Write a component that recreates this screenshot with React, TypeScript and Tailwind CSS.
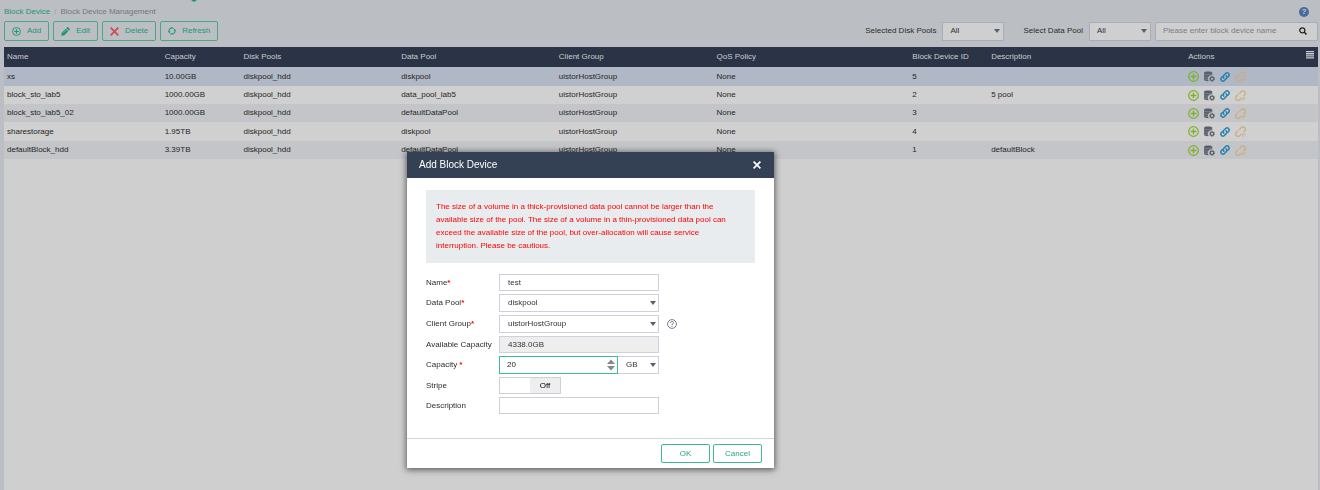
import React from "react";

const rows = [
  ["xs", "10.00GB", "diskpool_hdd", "diskpool", "uistorHostGroup", "None", "5", ""],
  ["block_sto_lab5", "1000.00GB", "diskpool_hdd", "data_pool_lab5", "uistorHostGroup", "None", "2", "5 pool"],
  ["block_sto_lab5_02", "1000.00GB", "diskpool_hdd", "defaultDataPool", "uistorHostGroup", "None", "3", ""],
  ["sharestorage", "1.95TB", "diskpool_hdd", "diskpool", "uistorHostGroup", "None", "4", ""],
  ["defaultBlock_hdd", "3.39TB", "diskpool_hdd", "defaultDataPool", "uistorHostGroup", "None", "1", "defaultBlock"],
];

const columns = [
  { label: "Name", width: "w-[12%]" },
  { label: "Capacity", width: "w-[6%]" },
  { label: "Disk Pools", width: "w-[12%]" },
  { label: "Data Pool", width: "w-[12%]" },
  { label: "Client Group", width: "w-[12%]" },
  { label: "QoS Policy", width: "w-[14.9%]" },
  { label: "Block Device ID", width: "w-[6%]" },
  { label: "Description", width: "w-[15%]" },
];

function PlusCircle({ className }: { className: string }) {
  return (
    <svg viewBox="0 0 20 20" className={className} fill="none" stroke="currentColor" aria-hidden="true">
      <circle cx="10" cy="10" r="8.8" strokeWidth="2.1" />
      <path d="M10 4.800v10.400M4.800 10h10.400" strokeWidth="2.500" />
    </svg>
  );
}

function DiskGear() {
  return (
    <svg viewBox="0 0 20 20" className="size-[11px]" aria-hidden="true">
      <path
        fill="#596069"
        d="M0 3.200C0 1.600 3.400.8 7.500.8S15 1.600 15 3.200v4.600A6.500 6.500 0 0 0 8.500 18.400l-1 .1C3.400 18.500 0 17.600 0 16z"
      />
      <path d="M0 5.400c2 1.800 13 1.800 15 0M0 10c1.600 1.200 5.500 1.500 8.800 1.200M0 14c1.600 1 4.500 1.300 7.500 1.100" stroke="#a0a6af" strokeWidth=".8" fill="none" />
      <circle cx="14.600" cy="14.300" r="3.200" fill="none" stroke="#596069" strokeWidth="2.300" />
      <circle cx="14.600" cy="14.300" r="4.600" fill="none" stroke="#596069" strokeWidth="1.400" strokeDasharray="1.900 1.710" />
    </svg>
  );
}

function ChainLink() {
  return (
    <svg viewBox="1 1 22 22" className="size-[10px]" fill="none" stroke="#2683b0" strokeWidth="3.300" strokeLinecap="round" aria-hidden="true">
      <path d="M9.500 14.500a4.600 4.600 0 0 1 0-6.500l3.800-3.700a4.600 4.600 0 0 1 6.500 6.500l-1.800 1.800" />
      <path d="M14.500 9.500a4.600 4.600 0 0 1 0 6.500l-3.800 3.700a4.600 4.600 0 0 1-6.500-6.500l1.800-1.800" />
    </svg>
  );
}

function BrokenLink() {
  return (
    <svg viewBox="1 1 22 22" className="size-[11px]" fill="none" stroke="#cbab78" strokeWidth="2.500" strokeLinecap="round" aria-hidden="true">
      <path d="M9.800 8.200l3.600-4a4.800 4.800 0 0 1 6.900 0a4.800 4.800 0 0 1 0 6.900l-1.500 1.500" />
      <path d="M6.500 10.800l-2.800 2.600a4.800 4.800 0 0 0 0 6.900a4.800 4.800 0 0 0 6.900 0l2.400-2.400" />
      <path d="M17.500 16.500l4 .8M16.300 18.300l.9 3.700" strokeWidth="1.900" />
    </svg>
  );
}

function Pencil() {
  return (
    <svg viewBox="0 0 20 20" className="size-[9px]" fill="currentColor" aria-hidden="true">
      <path d="M.5 19.500l1.200-7L10.500 3.700l5.800 5.800-8.800 8.800z" />
      <path d="M11.700 2.500L13.500.7c.7-.7 1.600-.7 2.300 0l3.500 3.500c.7.700.7 1.600 0 2.300l-1.800 1.800z" />
      <path d="M5.500 12.500l6-6" stroke="#bbbfc3" strokeWidth="1.200" />
    </svg>
  );
}

function RedCross() {
  return (
    <svg viewBox="0 0 20 20" className="size-[9px]" fill="none" stroke="#c54e52" strokeWidth="3.800" aria-hidden="true">
      <path d="M1.500 1.500l17 17M18.500 1.500l-17 17" />
    </svg>
  );
}

function RefreshRing() {
  return (
    <svg viewBox="0 0 20 20" className="size-2" fill="none" stroke="currentColor" strokeWidth="2.600" aria-hidden="true">
      <path d="M3.200 13.500A7.600 7.600 0 0 1 14 3.600M16.800 6.500A7.600 7.600 0 0 1 6 16.400" />
      <path d="M0 10.500l3.200 4.500L7 11.500zM20 9.500L16.800 5 13 8.500z" fill="currentColor" stroke="none" />
    </svg>
  );
}

function Caret({ className = "" }: { className?: string }) {
  return (
    <svg viewBox="0 0 6 4" className={`pointer-events-none absolute h-1 w-1.5 ${className}`} aria-hidden="true">
      <path d="M0 0h6L3 4z" fill="#556070" />
    </svg>
  );
}

function ToolButton({ icon, label }: { icon: React.ReactNode; label: string }) {
  return (
    <button type="button" className="flex h-5 items-center gap-1.5 rounded-xs border border-[#4ba68a] px-[7px] text-[#1f9670]">
      {icon}
      {label}
    </button>
  );
}

function Filter({ id, label }: { id: string; label: string }) {
  return (
    <div className="flex items-center gap-1.5">
      <label htmlFor={id} className="text-[#2c2c2c]">{label}</label>
      <div className="relative flex items-center">
        <select id={id} className="h-[19px] w-[62px] appearance-none border border-[#a9adba] bg-[#cfcfcf] px-[7px] text-[#333]">
          <option>All</option>
        </select>
        <Caret className="right-1" />
      </div>
    </div>
  );
}

function Field({ id, label, required, children }: { id: string; label: React.ReactNode; required?: boolean; children: React.ReactNode }) {
  return (
    <div className="flex items-center">
      <label htmlFor={id} className="w-[73px] shrink-0 whitespace-nowrap text-[#2c2c2c]">
        {label}
        {required && <span className="font-bold text-[#f00]">*</span>}
      </label>
      {children}
    </div>
  );
}

function SelectBox({ id, value }: { id: string; value: string }) {
  return (
    <div className="relative flex items-center">
      <select id={id} className="h-[18px] w-40 appearance-none border border-[#cfd0dc] bg-white px-2 text-[#333]">
        <option>{value}</option>
      </select>
      <Caret className="right-[3px]" />
    </div>
  );
}

const inputClass = "h-[17px] w-40 border border-[#cfd0dc] px-2 text-[#333]";
const footerButton = "h-[19px] w-[49px] rounded-xs border border-[#3dbb91] text-[#1fa97c]";

export default function App() {
  return (
    <div className="min-h-screen bg-[#bbbfc3] font-['Liberation_Sans',Arial,sans-serif] text-[8px] leading-3">
      <svg viewBox="0 0 6 2" className="absolute top-0 left-[191px] h-0.5 w-1.5" aria-hidden="true">
        <path d="M0 0h6L3 2z" fill="#1f9670" />
      </svg>
      <main className="flex min-h-screen flex-col pr-0.5 pl-1">
        <header className="flex items-center justify-between pt-1.5 pr-[9px]">
          <nav aria-label="Breadcrumb" className="flex gap-1">
            <a href="#" className="text-[#1f9670]">Block Device</a>
            <span className="text-[#9a9da1]">/</span>
            <span className="text-[#74777b]">Block Device Management</span>
          </nav>
          <button type="button" aria-label="Help" className="flex size-[10px] items-center justify-center rounded-full bg-[#4a6a9c] text-[8px] font-bold text-[#c4c8ce]">?</button>
        </header>
        <div className="mt-[3px] flex items-center justify-between">
          <div className="flex gap-1">
            <ToolButton icon={<PlusCircle className="size-[9px]" />} label="Add" />
            <ToolButton icon={<Pencil />} label="Edit" />
            <ToolButton icon={<RedCross />} label="Delete" />
            <ToolButton icon={<RefreshRing />} label="Refresh" />
          </div>
          <div className="flex items-center">
            <Filter id="disk" label="Selected Disk Pools" />
            <div className="ml-[19px]"><Filter id="data" label="Select Data Pool" /></div>
            <div className="ml-1 flex h-[19px] w-[163px] items-center rounded-xs border border-[#a9adba] bg-[#cfcfcf] pr-2.5 pl-[7px]">
              <input aria-label="Search block devices" placeholder="Please enter block device name" className="min-w-0 flex-1 bg-transparent placeholder:text-[#7b7d80]" />
              <button type="button" aria-label="Search">
                <svg viewBox="0 0 18 18" className="size-2" fill="none" stroke="#1b1f26" aria-hidden="true">
                  <circle cx="7.500" cy="7.500" r="5.800" strokeWidth="2.800" />
                  <path d="M12 12l5 5" strokeWidth="3.400" />
                </svg>
              </button>
            </div>
          </div>
        </div>
        <section className="mt-1.5 flex-1 bg-[#cfcfcf]">
          <table className="w-full table-fixed border-collapse text-left text-[#262626]">
            <thead>
              <tr className="h-5 bg-[#2a3446] text-[#c9ccd0]">
                {columns.map((c) => (
                  <th key={c.label} className={`${c.width} p-0 pl-[3px] font-normal whitespace-nowrap`}>{c.label}</th>
                ))}
                <th className="p-0 pr-1 pl-[3px] font-normal">
                  <span className="flex items-start justify-between">
                    Actions
                    <button type="button" aria-label="Choose columns">
                      <svg viewBox="0 0 16 16" className="size-2" fill="#c9ccd0" aria-hidden="true">
                        <path d="M0 0h16v2.600H0zM0 4.200h16v2.600H0zM0 8.400h16V11H0zM0 12.600h16v2.600H0z" />
                      </svg>
                    </button>
                  </span>
                </th>
              </tr>
            </thead>
            <tbody>
              {rows.map((r, index) => (
                <tr
                  key={r[0]}
                  className={`h-[18px] nth-[3n+1]:h-[19px] ${index === 0 ? "bg-[#b0b7c5]" : "odd:bg-[#c3c5c9] even:bg-[#d0d0d0]"}`}
                >
                  {r.map((v, i) => <td key={i} className="p-0 pl-[3px]">{v}</td>)}
                  <td className="p-0 pl-[3px]">
                    <span className="flex items-center gap-[5px]">
                      <button type="button" aria-label="Expand" className="text-[#7fb02a]"><PlusCircle className="size-[11px]" /></button>
                      <button type="button" aria-label="Configure"><DiskGear /></button>
                      <button type="button" aria-label="Map"><ChainLink /></button>
                      <button type="button" aria-label="Unmap"><BrokenLink /></button>
                    </span>
                  </td>
                </tr>
              ))}
            </tbody>
          </table>
        </section>
      </main>

      <div className="fixed inset-0 flex items-start justify-center pt-[152px] pr-[139px]">
        <div role="dialog" aria-labelledby="dialog-title" className="w-[367px] bg-white shadow-[0_1px_6px_1px_rgba(0,0,0,0.55)]">
          <div className="flex h-[26px] items-center justify-between bg-[#344053] pr-[13px] pl-3 text-white">
            <h2 id="dialog-title" className="text-[10px]">Add Block Device</h2>
            <button type="button" aria-label="Close">
              <svg viewBox="0 0 8 8" className="size-2" fill="none" stroke="#fff" strokeWidth="1.700" aria-hidden="true">
                <path d="M.6.6l6.800 6.800M7.400.6L.6 7.400" />
              </svg>
            </button>
          </div>
          <div className="px-[19px] pt-3 pb-6">
            <p className="bg-[#e8ecef] pt-2.5 pr-5 pb-[11px] pl-2.5 leading-[13px] text-[#f00]">
              The size of a volume in a thick-provisioned data pool cannot be larger than the available size of the pool. The size of a volume in a thin-provisioned data pool can exceed the available size of the pool, but over-allocation will cause service interruption. Please be cautious.
            </p>
            <form className="mt-[11px] flex flex-col gap-[3px]">
              <Field id="name" label="Name" required>
                <input id="name" className={`${inputClass} bg-white`} defaultValue="test" />
              </Field>
              <Field id="pool" label="Data Pool" required>
                <SelectBox id="pool" value="diskpool" />
              </Field>
              <Field id="group" label="Client Group" required>
                <SelectBox id="group" value="uistorHostGroup" />
                <svg viewBox="0 0 20 20" className="ml-2 size-[10px]" fill="none" stroke="#5c6673" aria-hidden="true">
                  <circle cx="10" cy="10" r="8.800" strokeWidth="1.700" />
                  <path d="M7 8c0-4 6-4 6-.5 0 2-3 2.200-3 4.500M10 13.500v2" strokeWidth="1.900" />
                </svg>
              </Field>
              <Field id="available" label="Available Capacity">
                <input id="available" className={`${inputClass} bg-[#eee]`} defaultValue="4338.0GB" readOnly />
              </Field>
              <Field id="capacity" label="Capacity " required>
                <div className="flex h-[18px] w-[119px] items-center border border-[#3dbb91] bg-white pr-0.5 pl-[7px]">
                  <input id="capacity" inputMode="numeric" className="min-w-0 flex-1 text-[#222] outline-none" defaultValue="20" />
                  <svg viewBox="0 0 8 12" className="h-3 w-2" fill="#888" aria-hidden="true">
                    <path d="M0 5h8L4 .5zM0 7h8l-4 4.500z" />
                  </svg>
                </div>
                <div className="relative flex items-center">
                  <select aria-label="Capacity unit" className="h-[18px] w-[41px] appearance-none border border-l-0 border-[#cfd0dc] bg-white px-2 text-[#333]">
                    <option>GB</option>
                  </select>
                  <Caret className="right-[3px]" />
                </div>
              </Field>
              <Field id="stripe" label="Stripe">
                <button id="stripe" type="button" role="switch" aria-checked="false" className="flex h-[17px] w-[62px] justify-end border border-[#cfcfd4] bg-white text-black">
                  <span className="flex h-full w-[30px] items-center justify-center bg-[#eee]">Off</span>
                </button>
              </Field>
              <Field id="description" label="Description">
                <input id="description" className={`${inputClass} bg-white`} />
              </Field>
            </form>
          </div>
          <div className="flex justify-end gap-[3px] border-t border-[#d5d5dd] py-[5px] pr-3">
            <button type="button" className={footerButton}>OK</button>
            <button type="button" className={footerButton}>Cancel</button>
          </div>
        </div>
      </div>
    </div>
  );
}
